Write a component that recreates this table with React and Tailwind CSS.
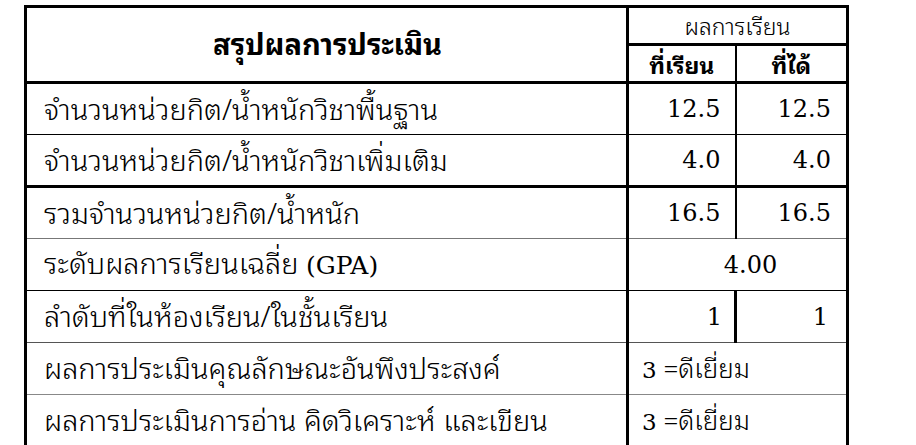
import React from "react";

const thai = "font-['Noto_Sans_Thai_Looped','Noto_Sans_Thai','Noto_Sans','DejaVu_Sans',sans-serif]";
const num = "font-['DejaVu_Serif','Liberation_Serif',serif]";
const label = `border-r-[3px] border-r-black pb-[4px] pl-[17px] text-[29px] font-light leading-none ${thai}`;

const rows = [
  { label: "จำนวนหน่วยกิต/น้ำหนักวิชาพื้นฐาน", a: "12.5", b: "12.5", line: "border-b border-b-black" },
  { label: "จำนวนหน่วยกิต/น้ำหนักวิชาเพิ่มเติม", a: "4.0", b: "4.0", line: "border-b-[3px] border-b-black" },
  { label: "รวมจำนวนหน่วยกิต/น้ำหนัก", a: "16.5", b: "16.5", line: "border-b border-b-[#777]" },
];

export default function App() {
  return (
    <div className="min-h-screen bg-white pl-[24px] pt-[5px] text-black">
      <table className="w-[822px] table-fixed border-collapse border-t-[3px] border-l-[3px] border-r-[3px] border-black">
        <colgroup>
          <col className="w-[602px]" />
          <col className="w-[108px]" />
          <col className="w-[112px]" />
        </colgroup>
        <thead>
          <tr className="h-[38px]">
            <th
              rowSpan={2}
              className={`border-r-[3px] border-b-[3px] border-black pb-[4px] pl-[2px] text-center align-middle text-[29px] font-bold leading-none ${thai}`}
            >
              สรุปผลการประเมิน
            </th>
            <th colSpan={2} className={`border-b-[3px] border-black pb-[2px] text-center text-[23px] font-light leading-none ${thai}`}>
              ผลการเรียน
            </th>
          </tr>
          <tr className="h-[38px]">
            <th className={`border-r-[2px] border-b-[3px] border-black text-center text-[23px] font-bold leading-none ${thai}`}>
              ที่เรียน
            </th>
            <th className={`border-b-[3px] border-black text-center text-[23px] font-bold leading-none ${thai}`}>
              ที่ได้
            </th>
          </tr>
        </thead>
        <tbody>
          {rows.map((r) => (
            <tr key={r.label} className="h-[52px]">
              <td className={`${label} ${r.line}`}>{r.label}</td>
              <td className={`border-r-[2px] border-r-black pr-[14px] text-right text-[24px] leading-none ${num} ${r.line}`}>
                {r.a}
              </td>
              <td className={`pr-[15px] text-right text-[24px] leading-none ${num} ${r.line}`}>
                {r.b}
              </td>
            </tr>
          ))}
          <tr className="h-[52px]">
            <td className={`${label} border-b border-b-black`}>
              ระดับผลการเรียนเฉลี่ย <span className={`text-[25px] font-normal ${num}`}>(GPA)</span>
            </td>
            <td colSpan={2} className={`border-b border-b-black pl-[26px] text-center text-[24px] leading-none ${num}`}>
              4.00
            </td>
          </tr>
          <tr className="h-[52px]">
            <td className={`${label} border-b border-b-[#555]`}>ลำดับที่ในห้องเรียน/ในชั้นเรียน</td>
            <td className={`border-r-[3px] border-r-black border-b border-b-[#555] pr-[12px] text-right text-[24px] leading-none ${num}`}>
              1
            </td>
            <td className={`border-b border-b-[#555] pr-[18px] text-right text-[24px] leading-none ${num}`}>
              1
            </td>
          </tr>
          <tr className="h-[52px]">
            <td className={`${label} border-b border-b-[#888]`}>ผลการประเมินคุณลักษณะอันพึงประสงค์</td>
            <td colSpan={2} className={`border-b border-b-[#888] pb-[2px] pl-[13px] text-left text-[26px] font-light leading-none ${thai}`}>
              <span className={`text-[23px] font-normal ${num}`}>3</span> =ดีเยี่ยม
            </td>
          </tr>
          <tr className="h-[52px]">
            <td className={label}>ผลการประเมินการอ่าน คิดวิเคราะห์ และเขียน</td>
            <td colSpan={2} className={`pb-[2px] pl-[13px] text-left text-[26px] font-light leading-none ${thai}`}>
              <span className={`text-[23px] font-normal ${num}`}>3</span> =ดีเยี่ยม
            </td>
          </tr>
        </tbody>
      </table>
    </div>
  );
}
